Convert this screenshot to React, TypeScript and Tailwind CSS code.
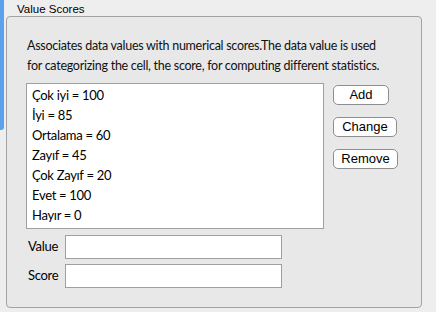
import React from 'react';

const entries = [
  'Çok iyi = 100',
  'İyi = 85',
  'Ortalama = 60',
  'Zayıf = 45',
  'Çok Zayıf = 20',
  'Evet = 100',
  'Hayır = 0',
];

const bodyFont = { fontFamily: 'Lato, "Noto Sans", sans-serif' };

export default function App() {
  return (
    <div className="relative w-[436px] h-[312px] bg-[#eeeeee] overflow-hidden" style={{ fontFamily: '"Liberation Sans", Arial, sans-serif' }}>
      {/* focus strip */}
      <div className="absolute left-0 top-0 w-[4px] h-[130px] rounded-br-[3px] bg-[#5ba2ec]" />

      <div className="pl-[17px] h-[16px] text-[11.5px] leading-[18px] text-black">Value Scores</div>

      <div className="ml-[6px] w-[416px] h-[292px] border border-[#a3a3a3] rounded-[4px] bg-[#e8e8e8] flex flex-col">
        <p className="pl-[20px] pt-[19px] text-[12.5px] leading-[20px] text-[#111] tracking-[-0.27px] whitespace-nowrap" style={bodyFont}>
          Associates data values with numerical scores.The data value is used
          <br />
          for categorizing the cell, the score, for computing different statistics.
        </p>

        <div className="flex mt-[7px] ml-[19px]">
          <div className="w-[298px] h-[146px] bg-white border border-[#a0a0a0] pl-[5px] pt-[1px]" style={bodyFont}>
            {entries.map((e) => (
              <div key={e} className="h-[20px] text-[13px] leading-[20px] tracking-[-0.3px] text-black">
                {e}
              </div>
            ))}
          </div>

          <div className="flex flex-col items-start gap-[12px] ml-[9px] mt-[2px]">
            <button className="w-[56px] h-[20px] bg-white border border-[#8e8e8e] rounded-[5px] text-[13px] leading-[18px] text-black">
              Add
            </button>
            <button className="w-[64px] h-[20px] bg-white border border-[#8e8e8e] rounded-[5px] text-[13px] leading-[18px] text-black">
              Change
            </button>
            <button className="w-[65px] h-[20px] bg-white border border-[#8e8e8e] rounded-[5px] text-[13px] leading-[18px] text-black">
              Remove
            </button>
          </div>
        </div>

        <div className="flex flex-col gap-[5px] mt-[6px] ml-[21px]" style={bodyFont}>
          <div className="flex items-center">
            <span className="w-[37px] text-[13px] tracking-[-0.3px] text-black">Value</span>
            <div className="w-[217px] h-[24px] bg-white border border-[#a0a0a0]" />
          </div>
          <div className="flex items-center">
            <span className="w-[37px] text-[13px] tracking-[-0.3px] text-black">Score</span>
            <div className="w-[217px] h-[24px] bg-white border border-[#a0a0a0]" />
          </div>
        </div>
      </div>
    </div>
  );
}
